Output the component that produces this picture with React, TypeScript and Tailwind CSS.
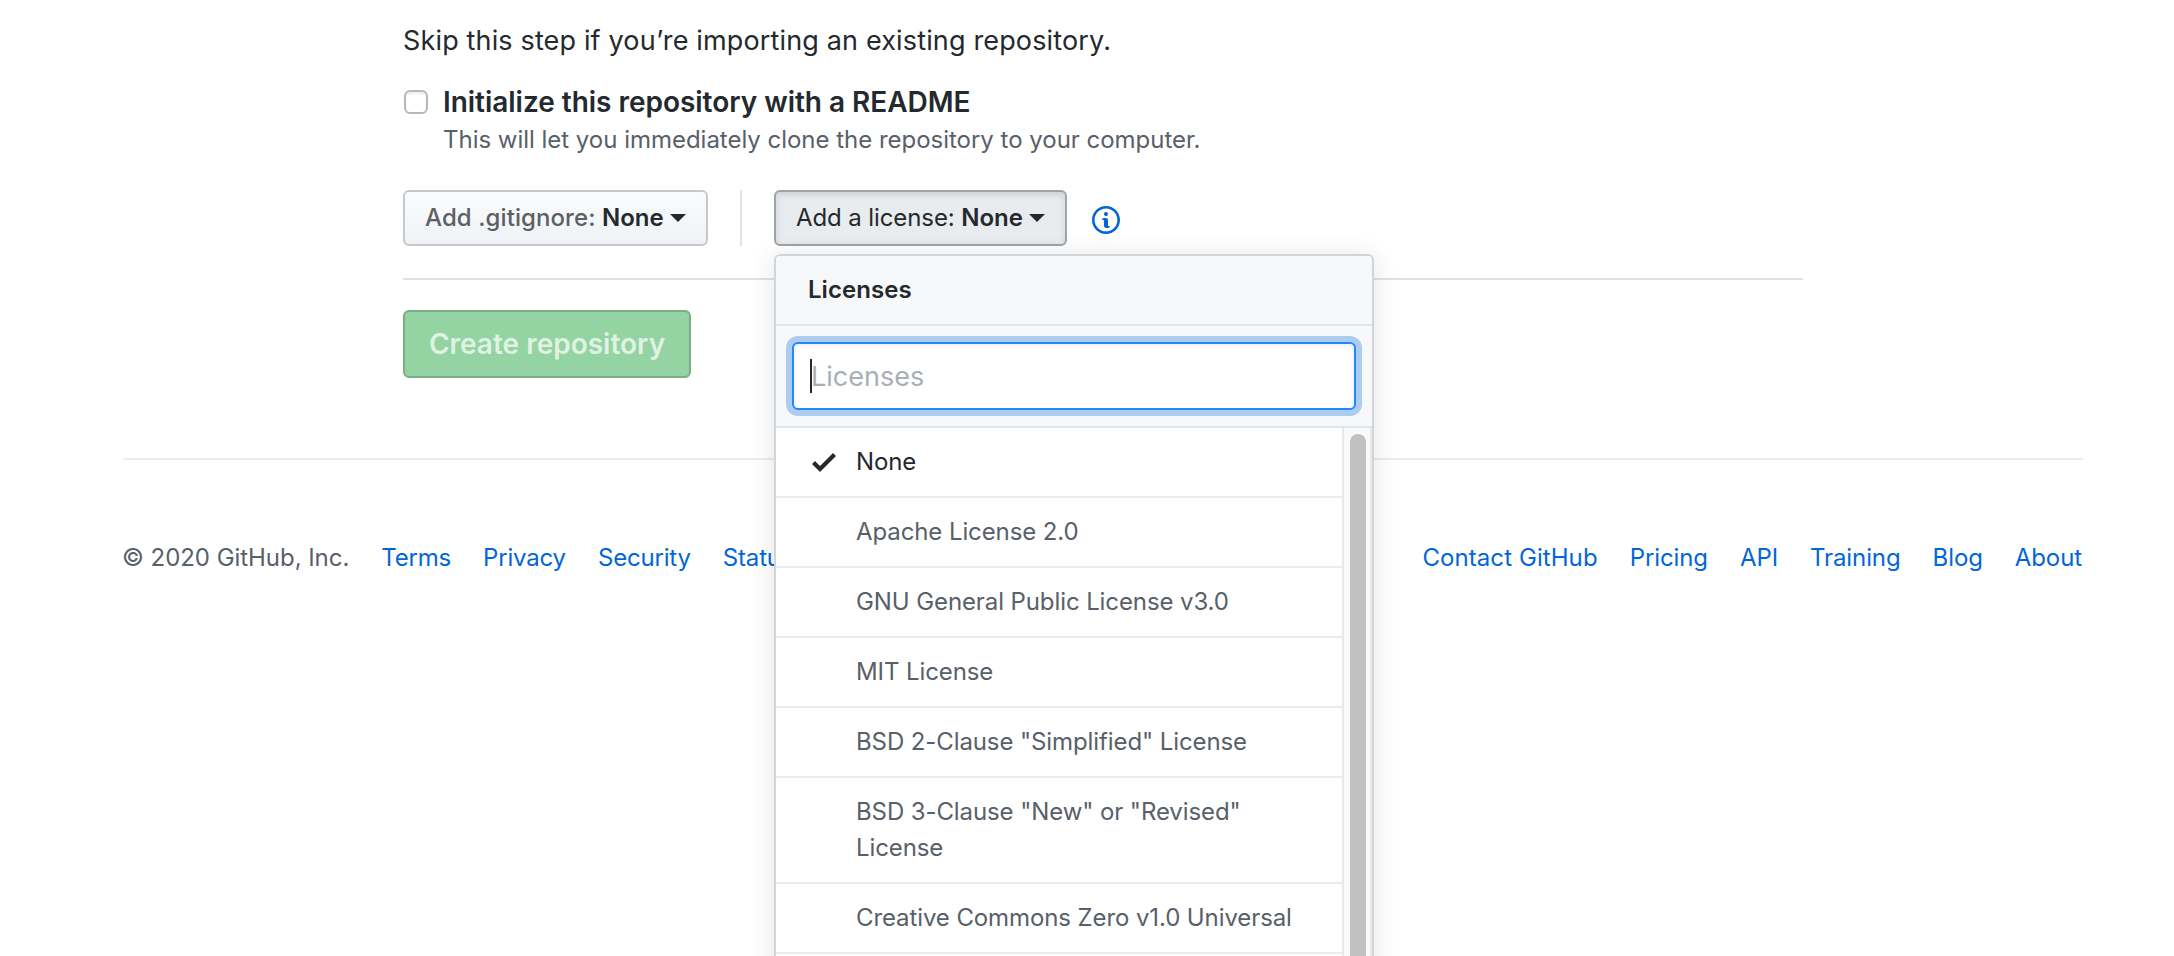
import { useState } from 'react';

const licenses = [
  'None',
  'Apache License 2.0',
  'GNU General Public License v3.0',
  'MIT License',
  'BSD 2-Clause "Simplified" License',
  'BSD 3-Clause "New" or "Revised" License',
  'Creative Commons Zero v1.0 Universal',
];

const footerLeft = ['Terms', 'Privacy', 'Security', 'Status', 'Help'];
const footerRight = ['Pricing', 'API', 'Training', 'Blog', 'About'];

function Caret() {
  return <span className="ml-1.5 border-x-8 border-t-8 border-x-transparent border-t-current" />;
}

function InfoIcon() {
  return (
    <svg viewBox="0 0 14 16" className="w-7 h-8 fill-[#0366d6]">
      <path
        fillRule="evenodd"
        d="M6.3 5.69a.942.942 0 0 1-.28-.7c0-.28.09-.52.28-.7.19-.18.42-.28.7-.28.28 0 .52.09.7.28.18.19.28.42.28.7 0 .28-.09.52-.28.7a1 1 0 0 1-.7.3c-.28 0-.52-.11-.7-.3zM8 7.99c-.02-.25-.11-.48-.31-.69-.2-.19-.42-.3-.69-.31H6c-.27.02-.48.13-.69.31-.2.2-.3.44-.31.69h1v3c.02.27.11.5.31.69.2.2.42.31.69.31h1c.27 0 .48-.11.69-.31.2-.19.3-.42.31-.69H8V7.98v.01zM7 2.3c-3.14 0-5.7 2.54-5.7 5.68 0 3.14 2.56 5.7 5.7 5.7s5.7-2.55 5.7-5.7c0-3.15-2.56-5.69-5.7-5.69v.01zM7 .98c3.86 0 7 3.14 7 7s-3.14 7-7 7-7-3.12-7-7 3.14-7 7-7z"
      />
    </svg>
  );
}

function CheckIcon() {
  return (
    <svg viewBox="0 0 12 16" className="w-6 h-8 fill-[#24292e]">
      <path fillRule="evenodd" d="M12 5l-8 8-4-4 1.5-1.5L4 10l6.5-6.5L12 5z" />
    </svg>
  );
}

function LicenseMenu() {
  const [selected, setSelected] = useState('None');

  return (
    <div className="absolute left-0 top-[64px] z-10 w-[600px] h-[760px] flex flex-col bg-white border-2 border-[#d1d5da] rounded-md shadow-[0_2px_24px_rgba(27,31,35,0.12)] overflow-hidden">
      <div className="h-[70px] shrink-0 pl-[32px] flex items-center bg-[#f6f8fa] border-b-2 border-[#e1e4e8] font-semibold">
        <span className="tracking-[0.05px]">Licenses</span>
      </div>

      <div className="shrink-0 p-4 bg-[#f6f8fa] border-b-2 border-[#e1e4e8]">
        <div className="h-[68px] flex items-center pl-4 bg-white border-2 border-[#2188ff] rounded-md shadow-[inset_0_2px_4px_rgba(27,31,35,0.075),0_0_0_6px_rgba(3,102,214,0.3)]">
          <span className="w-0.5 h-[34px] bg-[#24292e]" />
          <span className="-ml-px pt-0.5 text-[27px] text-[#a9afb6]">Licenses</span>
        </div>
      </div>

      <div className="flex flex-1 min-h-0">
        <div className="flex-1 overflow-hidden">
          {licenses.map((name) => (
            <button
              key={name}
              onClick={() => setSelected(name)}
              className="flex w-full items-start pl-9 pr-4 py-4 text-left leading-9 tracking-[-0.1px] border-b-2 border-[#eaecef] text-[#586069]"
            >
              <span className="w-11 shrink-0 pt-0.5">{name === selected && <CheckIcon />}</span>
              <span className={name === selected ? 'text-[#24292e]' : ''}>{name}</span>
            </button>
          ))}
        </div>
        <div className="w-[30px] bg-[#fafafa] border-l-2 border-r-2 border-[#e8e8e8] pt-1.5 pl-1.5">
          <div className="w-4 h-full rounded-full bg-[#c1c1c1]" />
        </div>
      </div>
    </div>
  );
}

export default function App() {
  return (
    <div className="h-[956px] overflow-hidden bg-white font-['Inter',sans-serif] text-[24px] text-[#24292e]">
      <main className="w-[1400px] ml-[403px] pt-5">
        <p className="text-[27px] leading-[42px] tracking-[0.15px]">Skip this step if you’re importing an existing repository.</p>

        <div className="flex pt-6">
          <span className="ml-px mt-1 w-6 h-6 shrink-0 rounded-md border-2 border-[#b8b8b8] shadow-[inset_0_2px_2px_rgba(0,0,0,0.08)]" />
          <div className="pl-[15px]">
            <p className="text-[28px] leading-8 tracking-[-0.03px] font-semibold">Initialize this repository with a README</p>
            <p className="mt-1 leading-9 tracking-[-0.02px] text-[#586069]">
              This will let you immediately clone the repository to your computer.
            </p>
          </div>
        </div>

        <div className="mt-8 flex h-14">
          <button className="w-[305px] pl-5 flex items-center rounded-md border-2 border-[#c5c9cd] bg-linear-to-b from-[#fafbfc] to-[#eff3f6] whitespace-pre">
            <span className="font-medium tracking-[0.08px] text-[#5c6064]">Add .gitignore: </span>
            <span className="font-semibold">None</span>
            <Caret />
          </button>
          <div className="ml-8 w-0.5 bg-[#e1e4e8]" />
          <div className="relative ml-8">
            <button className="w-[293px] h-14 pl-5 flex items-center rounded-md border-2 border-[#a0a4a8] bg-[#e9ecef] shadow-[inset_0_3px_6px_rgba(27,31,35,0.13)] whitespace-pre">
              <span className="tracking-[-0.1px]">Add a license: </span>
              <span className="font-semibold">None</span>
              <Caret />
            </button>
            <LicenseMenu />
          </div>
          <div className="ml-[25px] pt-[14px]">
            <InfoIcon />
          </div>
        </div>

        <div className="mt-8 h-0.5 bg-[#dfe2e5]" />

        <button className="mt-[30px] w-[288px] h-[68px] flex items-center justify-center rounded-md border-2 border-[#7bae88] bg-[#94d3a2] text-[28px] font-semibold text-[#dff2e3]">
          Create repository
        </button>
      </main>

      <footer className="mt-20 ml-[123px] w-[1960px] pt-20 border-t-2 border-[#eaecef] flex justify-between leading-9 text-[#0366d6]">
        <div className="-ml-px flex gap-8">
          <span className="tracking-[-0.05px] text-[#586069]">© 2020 GitHub, Inc.</span>
          {footerLeft.map((item) => (
            <a key={item} href="#" className="tracking-[-0.18px]">{item}</a>
          ))}
        </div>
        <div className="mr-px flex gap-8">
          <a href="#" className="tracking-[0.08px]">Contact GitHub</a>
          {footerRight.map((item) => (
            <a key={item} href="#" className="tracking-[-0.1px]">{item}</a>
          ))}
        </div>
      </footer>
    </div>
  );
}
